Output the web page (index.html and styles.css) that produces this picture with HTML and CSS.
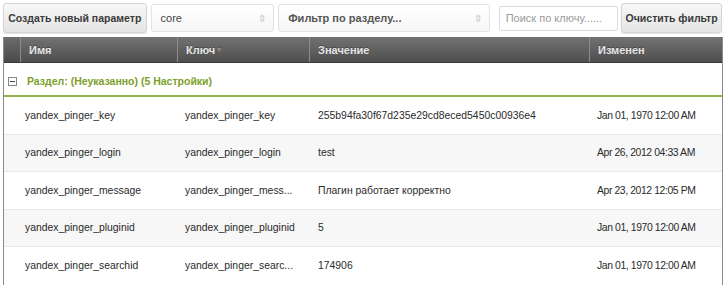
FILE: index.html
```html
<!DOCTYPE html>
<html>
<head>
<meta charset="utf-8">
<link rel="stylesheet" href="styles.css">
</head>
<body>
<div class="toolbar">
  <button class="btn btn-create">Создать новый параметр</button>
  <div class="select sel-core"><span>core</span><span class="arrows">&#8691;</span></div>
  <div class="select sel-section"><span>Фильтр по разделу...</span><span class="arrows">&#8691;</span></div>
  <div class="search"><span>Поиск по ключу......</span></div>
  <button class="btn btn-clear">Очистить фильтр</button>
</div>
<div class="grid">
  <div class="head">
    <div class="hc c0"></div>
    <div class="hc c1">Имя</div>
    <div class="hc c2">Ключ <span class="sort">&#9662;</span></div>
    <div class="hc c3">Значение</div>
    <div class="hc c4">Изменен</div>
  </div>
  <div class="group"><span class="minus"></span>Раздел: (Неуказанно) (5 Настройки)</div>
  <div class="row">
    <div class="c c1">yandex_pinger_key</div>
    <div class="c c2">yandex_pinger_key</div>
    <div class="c c3">255b94fa30f67d235e29cd8eced5450c00936e4</div>
    <div class="c c4">Jan 01, 1970 12:00 AM</div>
  </div>
  <div class="row alt">
    <div class="c c1">yandex_pinger_login</div>
    <div class="c c2">yandex_pinger_login</div>
    <div class="c c3">test</div>
    <div class="c c4">Apr 26, 2012 04:33 AM</div>
  </div>
  <div class="row">
    <div class="c c1">yandex_pinger_message</div>
    <div class="c c2">yandex_pinger_mess...</div>
    <div class="c c3">Плагин работает корректно</div>
    <div class="c c4">Apr 23, 2012 12:05 PM</div>
  </div>
  <div class="row alt">
    <div class="c c1">yandex_pinger_pluginid</div>
    <div class="c c2">yandex_pinger_pluginid</div>
    <div class="c c3">5</div>
    <div class="c c4">Jan 01, 1970 12:00 AM</div>
  </div>
  <div class="row">
    <div class="c c1">yandex_pinger_searchid</div>
    <div class="c c2">yandex_pinger_searc...</div>
    <div class="c c3">174906</div>
    <div class="c c4">Jan 01, 1970 12:00 AM</div>
  </div>
</div>
</body>
</html>
```
FILE: styles.css
```css
* { box-sizing: border-box; }
body {
  margin: 0;
  padding: 3px 3px 0 3px;
  background: #fff;
  font-family: "Liberation Sans", Arial, sans-serif;
  font-size: 11px;
  color: #222;
  overflow: hidden;
}
.toolbar {
  display: flex;
  align-items: center;
  height: 30px;
  gap: 4px;
}
.btn {
  height: 30px;
  border: 1px solid #d4d4d4;
  border-radius: 3px;
  background: linear-gradient(#f8f8f8, #e4e4e4);
  font-family: "Liberation Sans", Arial, sans-serif;
  font-weight: bold;
  font-size: 10.5px;
  color: #3a3a3a;
  padding: 0;
  white-space: nowrap;
  box-shadow: 0 1px 1px rgba(0,0,0,0.12);
}
.btn-create { width: 144px; }
.btn-clear { width: 101px; margin-left: -1px; }
.select {
  height: 28px;
  border: 1px solid #e2e2e2;
  border-radius: 3px;
  background: linear-gradient(#fff, #f6f6f6);
  display: flex;
  align-items: center;
  justify-content: space-between;
  padding: 0 7px 0 9px;
  font-family: "Liberation Sans", Arial, sans-serif;
  font-size: 11px;
  color: #444;
}
.sel-core { width: 124px; }
.sel-section { width: 212px; font-weight: bold; color: #555; }
.arrows { color: #bbb; font-size: 10px; font-weight: normal; }
.search {
  height: 25px;
  width: 120px;
  margin-left: 5px;
  border: 1px solid #dcdcdc;
  border-radius: 2px;
  display: flex;
  align-items: center;
  padding-left: 6px;
  color: #999;
  font-size: 11px;
}
.grid {
  margin-top: 4px;
  border-left: 1px solid #8a8a8a;
  border-right: 1px solid #8a8a8a;
  width: 720px;
}
.head {
  display: flex;
  height: 26px;
  background: linear-gradient(#737373, #4e4e4e);
  border-bottom: 1px solid #3a3a3a;
}
.hc {
  display: flex;
  align-items: center;
  padding-left: 8px;
  color: #e6e6e6;
  font-weight: bold;
  font-size: 11px;
  font-family: "Liberation Sans", Arial, sans-serif;
  border-right: 1px solid #8c8c8c;
  text-shadow: 0 -1px 0 rgba(0,0,0,0.3);
}
.hc.c0 { width: 17px; padding: 0; background: rgba(0,0,0,0.05); }
.hc.c1 { width: 157px; }
.hc.c2 { width: 132px; }
.hc.c3 { width: 280px; }
.hc.c4 { flex: 1; border-right: none; }
.sort { color: #888; font-size: 8px; margin-left: 2px; }
.group {
  height: 34px;
  border-bottom: 2px solid #93b34a;
  display: flex;
  align-items: center;
  padding-left: 4px;
  color: #7da02a;
  font-weight: bold;
  font-family: "Liberation Sans", Arial, sans-serif;
  font-size: 10.5px;
  padding-top: 4px;
}
.minus {
  width: 9px;
  height: 9px;
  border: 1px solid #888;
  margin-right: 10px;
  position: relative;
  background: #fff;
}
.minus::after {
  content: "";
  position: absolute;
  left: 1px;
  right: 1px;
  top: 3px;
  height: 1px;
  background: #444;
}
.row {
  display: flex;
  height: 37.5px;
  border-bottom: 1px solid #e8e8e8;
  align-items: center;
  font-size: 10.4px;
  color: #2a2a2a;
}
.row.alt { background: #f7f7f7; }
.row:last-child { border-bottom: none; }
.c { white-space: nowrap; overflow: hidden; }
.c.c1 { width: 175px; padding-left: 21px; }
.c.c2 { width: 132px; padding-left: 6px; }
.c.c3 { width: 281px; padding-left: 7px; }
.c.c4 { flex: 1; padding-left: 5px; letter-spacing: -0.4px; }
```
